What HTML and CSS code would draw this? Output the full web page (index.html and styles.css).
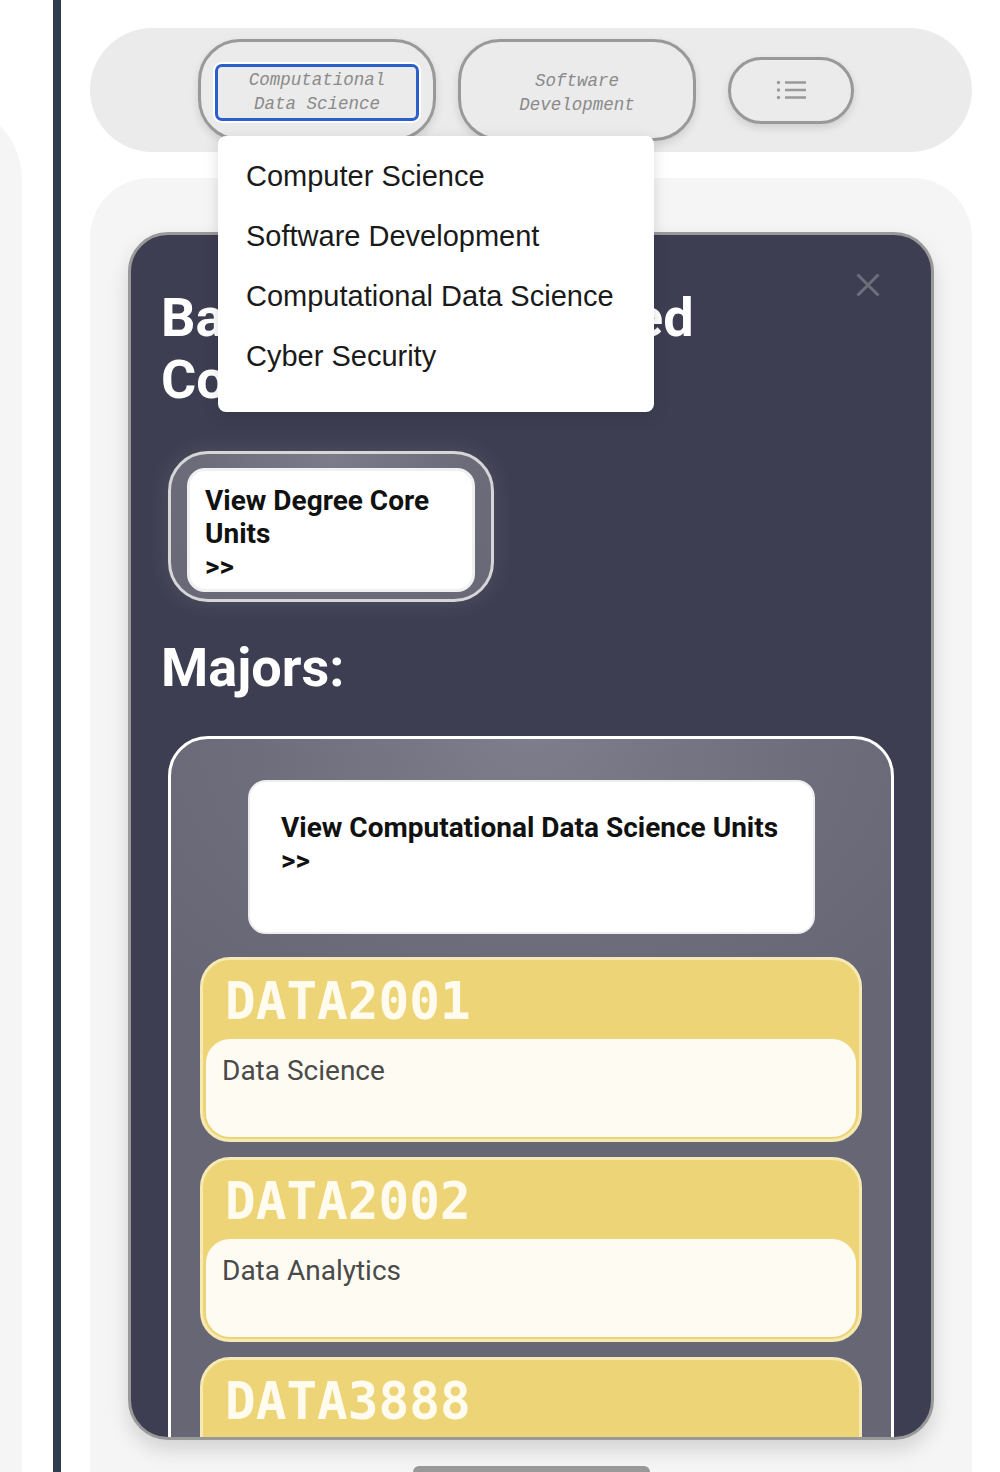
FILE: index.html
```html
<!DOCTYPE html>
<html lang="en">
<head>
<meta charset="utf-8">
<title>Bachelor of Advanced Computing</title>
<link rel="stylesheet" href="styles.css">
</head>
<body>
<div class="page">
  <div class="side"><div class="side-inner"></div></div>
  <div class="rail"></div>
  <main class="main">
    <header class="topbar">
      <div class="tab tab-active">
        <span class="tab-label focus">Computational<br>Data Science</span>
        <ul class="dropdown">
          <li>Computer Science</li>
          <li>Software Development</li>
          <li>Computational Data Science</li>
          <li>Cyber Security</li>
        </ul>
      </div>
      <div class="tab"><span class="tab-label">Software<br>Development</span></div>
      <button class="menu-btn" aria-label="Menu">
        <svg class="menu-icon" width="31" height="20" viewBox="0 0 31 20">
          <circle cx="2.5" cy="2.5" r="1.7"/>
          <circle cx="2.5" cy="10" r="1.7"/>
          <circle cx="2.5" cy="17.5" r="1.7"/>
          <path d="M9 2.5H30M9 10H30M9 17.5H30"/>
        </svg>
      </button>
    </header>
    <section class="content">
      <article class="degree">
        <button class="close" aria-label="Close">
          <svg width="24" height="24" viewBox="0 0 24 24"><path d="M1.5 1.5L22.5 22.5M22.5 1.5L1.5 22.5"/></svg>
        </button>
        <h1 class="degree-title">Bachelor of Advanced<br>Computing</h1>
        <div class="core-btn"><div class="core-inner">View Degree Core<br>Units<br>&gt;&gt;</div></div>
        <h2 class="majors-title">Majors:</h2>
        <div class="majors">
          <div class="major-link">View Computational Data Science Units<br>&gt;&gt;</div>
          <div class="units">
            <div class="unit">
              <div class="unit-code">DATA2001</div>
              <div class="unit-body">Data Science</div>
            </div>
            <div class="unit">
              <div class="unit-code">DATA2002</div>
              <div class="unit-body">Data Analytics</div>
            </div>
            <div class="unit">
              <div class="unit-code">DATA3888</div>
              <div class="unit-body">Data Science Capstone</div>
            </div>
          </div>
        </div>
      </article>
      <div class="handle"></div>
    </section>
  </main>
</div>
</body>
</html>
```
FILE: styles.css
```css
html, body {
  margin: 0;
  padding: 0;
  background: #ffffff;
}
body {
  width: 1000px;
  height: 1472px;
  overflow: hidden;
  font-family: Roboto, "Liberation Sans", sans-serif;
}
.page {
  display: flex;
  width: 1000px;
  height: 1472px;
  overflow: hidden;
}
.side {
  width: 22px;
  flex-shrink: 0;
  margin-top: 110px;
  overflow: hidden;
}
.side-inner {
  width: 82px;
  height: 100%;
  margin-left: -60px;
  background: #f5f5f5;
  border-top-right-radius: 60px 70px;
}
.rail {
  width: 8px;
  flex-shrink: 0;
  margin-left: 31px;
  background: #2f3d4f;
}
.main {
  width: 882px;
  flex-shrink: 0;
  margin-left: 29px;
  padding-top: 28px;
  display: flex;
  flex-direction: column;
}
.topbar {
  flex-shrink: 0;
  height: 124px;
  box-sizing: border-box;
  background: #ebebeb;
  border-radius: 62px;
  display: flex;
  align-items: center;
  padding-left: 108px;
  gap: 22px;
}
.tab {
  position: relative;
  flex-shrink: 0;
  width: 238px;
  height: 102px;
  box-sizing: border-box;
  border: 3px solid #999999;
  border-radius: 42px;
  background: #ebebeb;
  box-shadow: 0 4px 8px rgba(0, 0, 0, 0.12);
  display: flex;
  align-items: center;
  justify-content: center;
  padding-top: 6px;
}
.tab-label {
  font-family: "Liberation Mono", "DejaVu Sans Mono", monospace;
  font-style: italic;
  font-size: 17.5px;
  line-height: 24px;
  color: #8a8a8a;
  text-align: center;
}
.focus {
  width: 204px;
  height: 57px;
  box-sizing: border-box;
  border: 3px solid #2b5fcc;
  border-radius: 7px;
  box-shadow: 0 0 0 2px #ffffff;
  display: flex;
  align-items: center;
  justify-content: center;
  margin-top: -2px;
}
.dropdown {
  position: absolute;
  z-index: 10;
  left: 17px;
  top: 94px;
  width: 436px;
  height: 276px;
  box-sizing: border-box;
  margin: 0;
  padding: 10px 0 26px 28px;
  list-style: none;
  background: #ffffff;
  border-radius: 8px;
  box-shadow: 0 4px 16px rgba(0, 0, 0, 0.13);
  font-family: "Liberation Sans", Arial, sans-serif;
  font-size: 29px;
  line-height: 60px;
  color: #1a1a1a;
}
.dropdown li {
  white-space: nowrap;
}
.menu-btn {
  flex-shrink: 0;
  margin-left: 10px;
  width: 126px;
  height: 67px;
  box-sizing: border-box;
  border: 3px solid #999999;
  border-radius: 34px;
  background: #ebebeb;
  box-shadow: 0 4px 8px rgba(0, 0, 0, 0.12);
  display: flex;
  align-items: center;
  justify-content: center;
  padding: 0;
}
.menu-icon circle {
  fill: #999999;
}
.menu-icon path {
  stroke: #999999;
  stroke-width: 2.6;
  fill: none;
}
.content {
  flex: 1 0 auto;
  margin-top: 26px;
  padding: 54px 38px 0;
  background: #f5f5f5;
  border-radius: 60px 60px 0 0;
}
.degree {
  position: relative;
  height: 1208px;
  box-sizing: border-box;
  border: 3px solid #999999;
  border-radius: 40px;
  background: #3e3e52;
  overflow: hidden;
  padding: 52px 37px 0 30px;
  box-shadow: 0 10px 20px rgba(0, 0, 0, 0.14);
}
.close {
  position: absolute;
  top: 38px;
  right: 51px;
  width: 24px;
  height: 24px;
  padding: 0;
  border: 0;
  background: transparent;
}
.close svg {
  display: block;
}
.close path {
  stroke: #6e6e7a;
  stroke-width: 3;
}
.degree-title,
.majors-title {
  margin: 0;
  font-family: Roboto, "Liberation Sans", sans-serif;
  font-weight: 700;
  font-size: 54px;
  line-height: 62px;
  color: #ffffff;
}
.core-btn {
  margin: 40px 0 0 7px;
  width: 326px;
  height: 151px;
  box-sizing: border-box;
  border: 3px solid #d6d6d8;
  border-radius: 40px;
  background: radial-gradient(ellipse at 50% 0%, #7b7b89 0%, #6b6b79 60%, #686876 100%);
  padding: 14px 16px 7px;
  box-shadow: 0 0 24px rgba(255, 255, 255, 0.1);
}
.core-inner {
  height: 100%;
  box-sizing: border-box;
  background: #ffffff;
  border: 3px solid #f0f0f0;
  border-radius: 18px;
  padding: 13px 15px 5px;
  font-weight: 700;
  font-size: 28px;
  line-height: 33px;
  color: #111111;
}
.majors-title {
  margin-top: 35px;
}
.majors {
  margin: 37px 0 0 7px;
  border: 3px solid #ffffff;
  border-radius: 40px;
  background: radial-gradient(ellipse 70% 40% at 50% 0%, #7d7d8b 0%, #6c6c7a 60%, #666674 100%);
  padding: 41px 29px 60px;
}
.major-link {
  margin: 0 47px 0 48px;
  background: #ffffff;
  border: 2px solid #eeeeee;
  border-radius: 18px;
  padding: 29px 31px 55px;
  font-weight: 700;
  font-size: 28px;
  line-height: 33px;
  color: #111111;
}
.units {
  margin-top: 23px;
  display: flex;
  flex-direction: column;
  gap: 15px;
}
.unit {
  border: 3px solid #f7e9b4;
  border-radius: 30px;
  background: #edd577;
  padding: 0 3px 2px;
}
.unit-code {
  font-family: "DejaVu Sans Mono", "Liberation Mono", monospace;
  font-weight: 700;
  font-size: 51px;
  line-height: 58px;
  color: #fffbee;
  padding: 13px 0 8px 19px;
}
.unit-body {
  background: #fdfbf2;
  border-radius: 24px;
  padding: 15px 16px 50px;
  font-size: 28px;
  line-height: 33px;
  color: #4a4a4a;
}
.handle {
  width: 237px;
  height: 20px;
  margin: 26px auto 0;
  background: #999999;
  border-radius: 6px 6px 0 0;
}
```
